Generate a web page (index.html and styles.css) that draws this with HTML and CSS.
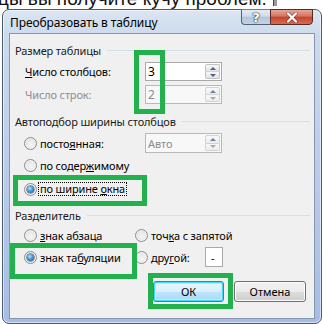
FILE: index.html
```html
<!DOCTYPE html>
<html lang="ru">
<head>
<meta charset="utf-8">
<title>Преобразовать в таблицу</title>
<link rel="stylesheet" href="styles.css">
</head>
<body>
<div class="doc-line"><span>цы вы получите кучу проблем.</span><span class="doc-mark"></span></div>

<div class="dialog">
  <div class="titlebar">
    <span class="title">Преобразовать в таблицу</span>
    <div class="caption-btns">
      <span class="cbtn help">?</span>
      <span class="cbtn close"><svg width="14" height="11" viewBox="0 0 14 11"><path d="M3 1.5 L11 9.5 M11 1.5 L3 9.5" stroke="#5a2016" stroke-width="3.6" stroke-linecap="round" opacity=".55"/><path d="M3 1.5 L11 9.5 M11 1.5 L3 9.5" stroke="#fff" stroke-width="2.2" stroke-linecap="round"/></svg></span>
    </div>
  </div>
  <div class="client">
    <div class="group-head"><span>Размер таблицы</span></div>
    <div class="field-row">
      <span class="field-label"><u>Ч</u>исло столбцов:</span>
      <div class="spin">
        <span class="spin-value">3</span>
        <div class="spin-btns"><span class="sb up"></span><span class="sb down"></span></div>
      </div>
    </div>
    <div class="field-row">
      <span class="field-label disabled">Число строк:</span>
      <div class="spin is-disabled">
        <span class="spin-value">2</span>
        <div class="spin-btns"><span class="sb up"></span><span class="sb down"></span></div>
      </div>
    </div>

    <div class="group-head head-2"><span>Автоподбор ширины столбцов</span></div>
    <div class="radio-row first">
      <span class="radio-col">
        <span class="radio"></span><span>посто<u>я</u>нная:</span>
      </span>
      <div class="spin is-disabled auto">
        <span class="spin-value">Авто</span>
        <div class="spin-btns"><span class="sb up"></span><span class="sb down"></span></div>
      </div>
    </div>
    <div class="radio-row">
      <span class="radio"></span><span>по содер<u>ж</u>имому</span>
    </div>
    <div class="radio-row third">
      <span class="radio on"></span><span class="focused">по ширине <u>о</u>кна</span>
    </div>

    <div class="group-head head-3"><span>Разделитель</span></div>
    <div class="radio-row sep-row">
      <span class="radio-col"><span class="radio"></span><span><u>з</u>нак абзаца</span></span>
      <span class="radio"></span><span>точ<u>к</u>а с запятой</span>
    </div>
    <div class="radio-row sep-row">
      <span class="radio-col"><span class="radio on"></span><span>знак та<u>б</u>уляции</span></span>
      <span class="radio-col2"><span class="radio"></span><span>дру<u>г</u>ой:</span></span>
      <span class="textbox">-</span>
    </div>

    <div class="buttons">
      <span class="btn default">ОК</span>
      <span class="btn">Отмена</span>
    </div>
  </div>
</div>

<div class="mark mark-1"></div>
<div class="mark mark-2"></div>
<div class="mark mark-3"></div>
<div class="mark mark-4"></div>
</body>
</html>
```

FILE: styles.css
```css
* { box-sizing: border-box; }
html, body { margin: 0; padding: 0; }
body {
  width: 323px;
  height: 324px;
  overflow: hidden;
  background: #fff;
  position: relative;
  font-family: "Noto Sans", "Open Sans", sans-serif;
  font-size: 11px;
  letter-spacing: -0.15px;
  color: #000;
}

/* document text behind the dialog */
.doc-line {
  display: flex;
  align-items: center;
  white-space: nowrap;
  margin: -11px 0 0 -2px;
  font: 19px/19px "Liberation Sans", sans-serif;
  letter-spacing: 0;
  color: #111;
}
.doc-mark {
  width: 4px;
  height: 14px;
  margin-left: 6px;
  background: #9a9a9a;
  border-left: 1px solid #444;
}

/* window */
.dialog {
  position: absolute;
  left: 2px;
  top: 9px;
  width: 320px;
  height: 315px;
  border: 1px solid #4d5b6e;
  border-radius: 7px;
  background: linear-gradient(#dce6f2 0, #ccdaec 8%, #bccee8 45%, #a7bce3 100%);
  box-shadow: inset 0 0 0 1px rgba(255,255,255,.55);
  padding: 0 6px 4px 6px;
  display: flex;
  flex-direction: column;
}
.titlebar {
  position: relative;
  height: 23px;
  flex: none;
  display: flex;
  align-items: center;
  padding: 1px 0 0 1px;
}
.title {
  font-size: 12px;
  letter-spacing: -0.1px;
  color: #000;
}
.caption-btns {
  position: absolute;
  top: -1px;
  right: 2px;
  display: flex;
}
.cbtn {
  height: 16px;
  display: flex;
  align-items: center;
  justify-content: center;
  border: 1px solid #52617a;
  border-top-color: #6d7c92;
}
.help {
  width: 29px;
  border-right: none;
  border-radius: 0 0 0 4px;
  background: linear-gradient(#e4ebf4 0, #cfdbea 45%, #b3c4db 50%, #c4d3e6 100%);
  color: #fff;
  font: bold 13px/1 "DejaVu Sans", sans-serif;
  letter-spacing: 0;
  text-shadow: 0 0 1px #2b3a50, 0 0 1px #2b3a50, 0 0 2px #2b3a50;
}
.close {
  width: 43px;
  border-radius: 0 0 4px 0;
  border-color: #5a2a22;
  background: linear-gradient(#e8a697 0, #d5735f 45%, #c2442d 50%, #d66c52 100%);
}

/* client area */
.client {
  flex: 1;
  background: #f0f0f0;
  border: 1px solid #8597b3;
  padding: 8px 4px 0 5px;
  display: flex;
  flex-direction: column;
}
.group-head {
  display: flex;
  align-items: center;
  height: 16px;
  white-space: nowrap;
  color: #1a1a1a;
}
.group-head::after {
  content: "";
  flex: 1;
  height: 1px;
  margin-left: 6px;
  background: #d5dfe5;
}
.head-2 { margin-top: 9px; }
.head-3 { margin-top: 8px; }

.field-row {
  display: flex;
  align-items: center;
  height: 19px;
  margin-top: 4px;
  padding-left: 10px;
}
.field-label { width: 120px; white-space: nowrap; }
.disabled { color: #8d8d8d; }

.spin {
  position: relative;
  width: 77px;
  height: 19px;
  border: 1px solid #a9a9a9;
  background: #fff;
  display: flex;
  align-items: center;
  padding-left: 2px;
  font-size: 12px;
  letter-spacing: 0;
}
.spin.is-disabled {
  border-color: #b9b9b9;
  background: #f8f8f8;
  color: #8d8d8d;
}
.spin.auto { height: 20px; font-size: 11px; }
.spin-btns {
  position: absolute;
  right: 1px;
  top: 1px;
  bottom: 1px;
  width: 15px;
  display: flex;
  flex-direction: column;
}
.sb {
  flex: 1;
  display: flex;
  align-items: center;
  justify-content: center;
  border: 1px solid #c2c2c2;
  background: linear-gradient(#f8f8f8, #e2e2e2);
}
.sb.up { border-bottom-color: #d4d4d4; border-radius: 2px 2px 0 0; }
.sb.down { border-top: none; border-radius: 0 0 2px 2px; }
.sb.up::before {
  content: "";
  border-left: 3px solid transparent;
  border-right: 3px solid transparent;
  border-bottom: 3px solid #4a5f93;
}
.sb.down::before {
  content: "";
  border-left: 3px solid transparent;
  border-right: 3px solid transparent;
  border-top: 3px solid #4a5f93;
}
.is-disabled .sb { border-color: #d3d3d3; background: linear-gradient(#f9f9f9, #ececec); }
.is-disabled .sb.up::before { border-bottom-color: #6d7fa8; }
.is-disabled .sb.down::before { border-top-color: #a8a8a8; }

.radio-row {
  display: flex;
  align-items: center;
  height: 20px;
  margin-top: 2px;
  padding-left: 9px;
  white-space: nowrap;
}
.radio-row.first { margin-top: 4px; }
.radio-row.third { margin-top: 4px; }
.radio-col {
  display: flex;
  align-items: center;
  width: 111px;
}
.radio-col2 {
  display: flex;
  align-items: center;
  width: 70px;
}
.radio-row.first .radio-col { width: 121px; }
.radio {
  position: relative;
  flex: none;
  width: 13px;
  height: 13px;
  margin-right: 3px;
  border-radius: 50%;
  border: 1px solid #8c8c8c;
  background: radial-gradient(circle at 55% 60%, #f6f6f6 0, #e6e6e6 55%, #cfcfcf 100%);
  box-shadow: inset 0 0 0 1px #f4f4f4;
}
.radio.on::after {
  content: "";
  position: absolute;
  left: 2px;
  top: 2px;
  width: 7px;
  height: 7px;
  border-radius: 50%;
  background: radial-gradient(circle at 40% 35%, #c6ebff 0, #55a6dc 35%, #1a4f86 100%);
  box-shadow: 0 0 0 0.5px #1c3f66;
}
.focused {
  outline: 1px dotted #000;
  padding: 0 1px;
  line-height: 12px;
  margin-left: -1px;
}
.textbox {
  width: 18px;
  height: 20px;
  border: 1px solid #a9a9a9;
  background: #fff;
  display: flex;
  align-items: center;
  padding-left: 5px;
}

.buttons {
  display: flex;
  justify-content: flex-end;
  gap: 10px;
  margin-top: 14px;
  padding-right: 4px;
}
.btn {
  width: 72px;
  height: 21px;
  display: flex;
  align-items: center;
  justify-content: center;
  border: 1px solid #707070;
  border-radius: 3px;
  letter-spacing: 0;
  background: linear-gradient(#f2f2f2 0, #ebebeb 50%, #dddddd 51%, #cfcfcf 100%);
  box-shadow: inset 0 0 0 1px #fcfcfc;
}
.btn.default {
  width: 71px;
  border-color: #3c7fb1;
  box-shadow: inset 0 0 0 1px #48d8fb, inset 0 0 0 2px #bde9f9;
  background: linear-gradient(#eaf6fd 0, #d9f0fc 50%, #bee6fd 51%, #a7d9f5 100%);
}

/* green annotation frames drawn over the screenshot */
.mark {
  position: absolute;
  border: 5px solid #22b14c;
}
.mark-1 { left: 134px; top: 50px; width: 31px; height: 64px; }
.mark-2 { left: 13px; top: 175px; width: 134px; height: 31px; }
.mark-3 { left: 10px; top: 243px; width: 127px; height: 36px; }
.mark-4 { left: 148px; top: 273px; width: 85px; height: 36px; }
```
